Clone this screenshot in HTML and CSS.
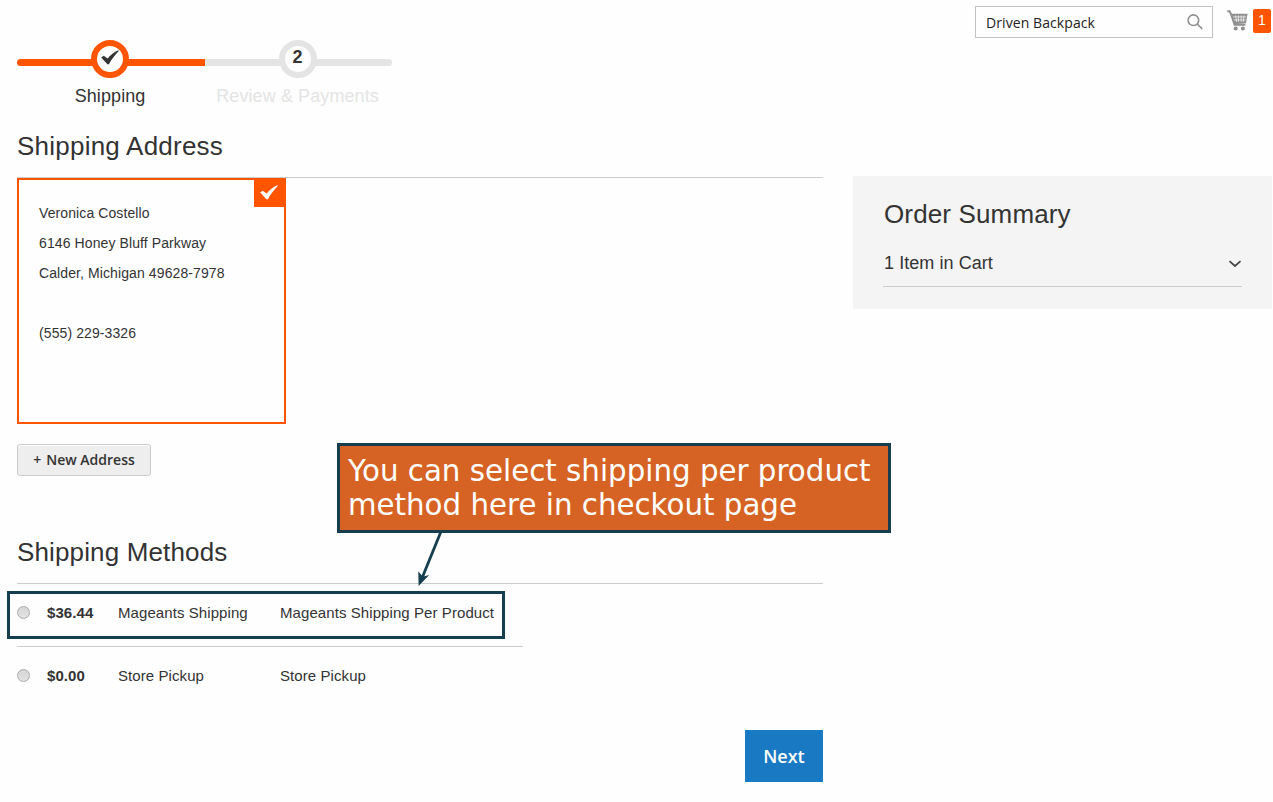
FILE: index.html
```html
<!DOCTYPE html>
<html lang="en">
<head>
<meta charset="utf-8">
<title>Checkout</title>
<link rel="stylesheet" href="styles.css">
</head>
<body>
<div class="page">
  <main class="main">
    <ul class="progress">
      <li class="step step-active">
        <span class="step-circle"><svg class="check" viewBox="0 0 18 15"><path d="M0.2 7.6 L2.7 5.8 L6.6 8.4 C9.5 5 13 1.8 17.3 0.2 L17.8 0.9 C14 4.8 10.6 9 7.9 14.3 L6.4 14.3 Z"/></svg></span>
        <span class="step-label">Shipping</span>
      </li>
      <li class="step">
        <span class="step-circle">2</span>
        <span class="step-label">Review &amp; Payments</span>
      </li>
    </ul>

    <section class="address">
      <h2 class="title title-address">Shipping Address</h2>
      <div class="card">
        <address class="card-text">Veronica Costello<br>6146 Honey Bluff Parkway<br>Calder, Michigan 49628-7978<br><br>(555) 229-3326</address>
        <span class="card-flag"><svg class="check" viewBox="0 0 18 15"><path d="M0.2 7.6 L2.7 5.8 L6.6 8.4 C9.5 5 13 1.8 17.3 0.2 L17.8 0.9 C14 4.8 10.6 9 7.9 14.3 L6.4 14.3 Z"/></svg></span>
      </div>
      <button class="new-address" type="button"><span class="plus">+</span><span>New Address</span></button>
    </section>

    <section class="methods">
      <h2 class="title">Shipping Methods</h2>
      <div class="method">
        <span class="radio"></span><b>$36.44</b><span>Mageants Shipping</span><span>Mageants Shipping Per Product</span>
        <span class="highlight"></span>
      </div>
      <div class="method">
        <span class="radio"></span><b>$0.00</b><span>Store Pickup</span><span>Store Pickup</span>
      </div>
    </section>
    <button class="next" type="button">Next</button>
  </main>

  <aside class="side">
    <div class="tools">
      <div class="search">
        <span>Driven Backpack</span>
        <svg class="search-icon" viewBox="0 0 16 16"><circle cx="6.4" cy="6.2" r="5.3"/><path d="M10.2 10 L15.2 14.9"/></svg>
      </div>
      <svg class="cart" viewBox="0 0 21 21">
        <path class="cart-line" d="M0.3 1.3 H2.6 L4.2 4.6 L7.6 14.8 H18.4"/>
        <path d="M3.8 3.8 H20.6 L18.9 13.2 L7.1 14.2 Z"/>
        <path class="cart-mesh" d="M6 6.9 H19.2 M6.8 9.9 H18.6 M8.6 5.4 L9.6 12 M11.4 5.4 V12 M14.2 5.4 V12 M17 5.4 L16.3 12"/>
        <circle cx="8.7" cy="18.5" r="2"/><circle cx="15.9" cy="18.5" r="2"/>
      </svg>
      <span class="count">1</span>
    </div>
    <section class="summary">
      <h2 class="summary-title">Order Summary</h2>
      <div class="summary-row"><span>1 Item in Cart</span><svg class="chevron" viewBox="0 0 14 8"><path d="M1.5 1.2 L7 6 L12.5 1.2"/></svg></div>
    </section>
  </aside>

  <div class="callout">You can select shipping per product<br>method here in checkout page</div>
  <svg class="arrow" viewBox="0 0 30 56"><path class="arrow-shaft" d="M22.8 0 L4.5 45"/><path d="M0.6 54 L0.3 39.3 L3.8 43.5 L6.5 44.3 L11.2 43 Z"/></svg>
</div>
</body>
</html>
```

FILE: styles.css
```css
* { box-sizing: border-box; }
body {
  margin: 0;
  background: #fefefe;
  color: #333;
  font-family: "Liberation Sans", Arial, sans-serif;
  font-size: 14px;
}
.page {
  position: relative;
  display: grid;
  grid-template-columns: 806px 419px;
  column-gap: 30px;
  width: 1273px;
  height: 802px;
  padding-left: 17px;
  overflow: hidden;
}
.main {
  display: flex;
  flex-direction: column;
  padding-top: 40px;
}
.progress {
  display: flex;
  width: 375px;
  height: 90px;
  margin: 0;
  padding: 0;
  list-style: none;
}
.step {
  position: relative;
  flex: 1;
  display: flex;
  flex-direction: column;
  align-items: center;
  padding-right: 1.4px;
  color: #e4e4e4;
}
.step::before {
  content: "";
  position: absolute;
  top: 19px;
  left: 0;
  right: 0;
  height: 7px;
  background: #e4e4e4;
  border-radius: 0 4px 4px 0;
}
.step-active { color: #333; }
.step-active::before { background: #ff5501; border-radius: 4px 0 0 4px; }
.step-circle {
  position: relative;
  display: flex;
  align-items: center;
  justify-content: center;
  width: 38px;
  height: 38px;
  padding-bottom: 3px;
  border: 6px solid #e4e4e4;
  border-radius: 50%;
  background: #fefefe;
  color: #333;
  font-weight: 700;
  font-size: 18px;
}
.step-active .step-circle { border-color: #ff5501; padding: 0 0 3px; }
.step-label { margin-top: 8px; font-size: 18px; line-height: 20px; letter-spacing: 0.1px; white-space: nowrap; }
.check { flex: none; width: 18px; height: 15px; fill: #333; }
.title {
  height: 48px;
  margin: 0;
  border-bottom: 1px solid #ccc;
  font-size: 26px;
  line-height: 32px;
  font-weight: 400;
  letter-spacing: 0.14px;
}
.title-address { letter-spacing: 0.23px; }
.address { height: 406px; }
.card {
  position: relative;
  width: 268.5px;
  height: 246px;
  padding: 18px 20px;
  border: 2px solid #ff5501;
}
.card-text { font-style: normal; line-height: 30px; letter-spacing: 0.1px; }
.card-flag {
  position: absolute;
  top: -2px;
  right: -1.5px;
  display: flex;
  align-items: center;
  justify-content: center;
  width: 31px;
  height: 29px;
  padding: 0 2px 1px 0;
  background: #ff5501;
}
.card-flag .check { fill: #fff; }
.new-address {
  display: flex;
  align-items: center;
  justify-content: center;
  gap: 5px;
  width: 134px;
  height: 32px;
  margin-top: 20px;
  padding: 0;
  border: 1px solid #ccc;
  border-radius: 3px;
  background: #eee;
  box-shadow: inset 0 1px 0 #fff;
  color: #333;
  font: 600 14px/16px "Open Sans", sans-serif;
}
.methods { height: 194px; }
.method {
  position: relative;
  display: grid;
  grid-template-columns: 30px 71px 162px auto;
  align-items: center;
  width: 506px;
  height: 63px;
  padding-bottom: 5px;
  border-bottom: 1px solid #ccc;
  font-size: 15px;
  letter-spacing: 0.08px;
}
.method:last-child { padding-bottom: 6px; border-bottom-color: transparent; }
.radio {
  width: 13px;
  height: 13px;
  margin-bottom: 1px;
  border: 1px solid #aaa;
  border-radius: 50%;
  background: linear-gradient(#d6d6d6, #e2e2e2);
}
.method:last-child .radio { margin-bottom: 0; }
.highlight {
  position: absolute;
  left: -10px;
  top: 7px;
  width: 498px;
  height: 48px;
  border: 3px solid #153f4f;
}
.next {
  align-self: flex-end;
  width: 78px;
  height: 52px;
  padding: 0;
  border: 0;
  background: #1979c3;
  color: #fff;
  font: 600 18px/22px "Open Sans", sans-serif;
}
.tools {
  display: flex;
  align-items: flex-start;
  height: 176px;
  padding: 6px 1px 0 122px;
}
.search {
  display: flex;
  align-items: center;
  justify-content: space-between;
  width: 238px;
  height: 32px;
  padding: 1px 9px 0 10px;
  border: 1px solid #c2c2c2;
  color: #222;
  font: 14px/18px "Open Sans", sans-serif;
  letter-spacing: 0.08px;
}
.search-icon { width: 16px; height: 16px; margin-top: -1px; fill: none; stroke: #8f8f8f; stroke-width: 1.6; }
.cart { width: 21px; height: 21px; margin: 4px 5px 0 14px; fill: #8f8f8f; }
.cart-line { fill: none; stroke: #8f8f8f; stroke-width: 2; }
.cart-mesh { fill: none; stroke: #fefefe; stroke-width: 0.7; }
.count {
  width: 18px;
  height: 24px;
  margin-top: 3px;
  border-radius: 2px;
  background: #ff5501;
  color: #fff;
  font: 14px/23px "Liberation Sans", sans-serif;
  text-align: center;
}
.summary { height: 133px; padding: 22px 30px; background: #f4f4f4; }
.summary-title { margin: 0; padding-left: 1px; font-size: 26px; line-height: 32px; font-weight: 400; letter-spacing: 0.14px; }
.summary-row {
  display: flex;
  align-items: center;
  justify-content: space-between;
  width: 359px;
  height: 57px;
  padding: 11px 0 0 1px;
  border-bottom: 1px solid #ccc;
  font-size: 18px;
  letter-spacing: 0.06px;
}
.chevron { width: 14px; height: 8px; fill: none; stroke: #444; stroke-width: 1.7; }
.callout {
  position: absolute;
  left: 337px;
  top: 443px;
  width: 554px;
  height: 90px;
  padding: 8px 8px;
  border: 3px solid #153f4f;
  background: #d66324;
  color: #fff;
  font: 29.3px/34px "DejaVu Sans", sans-serif;
  white-space: nowrap;
}
.arrow { position: absolute; left: 418px; top: 532px; width: 30px; height: 56px; fill: #153f4f; }
.arrow-shaft { stroke: #153f4f; stroke-width: 2.8; }
```
